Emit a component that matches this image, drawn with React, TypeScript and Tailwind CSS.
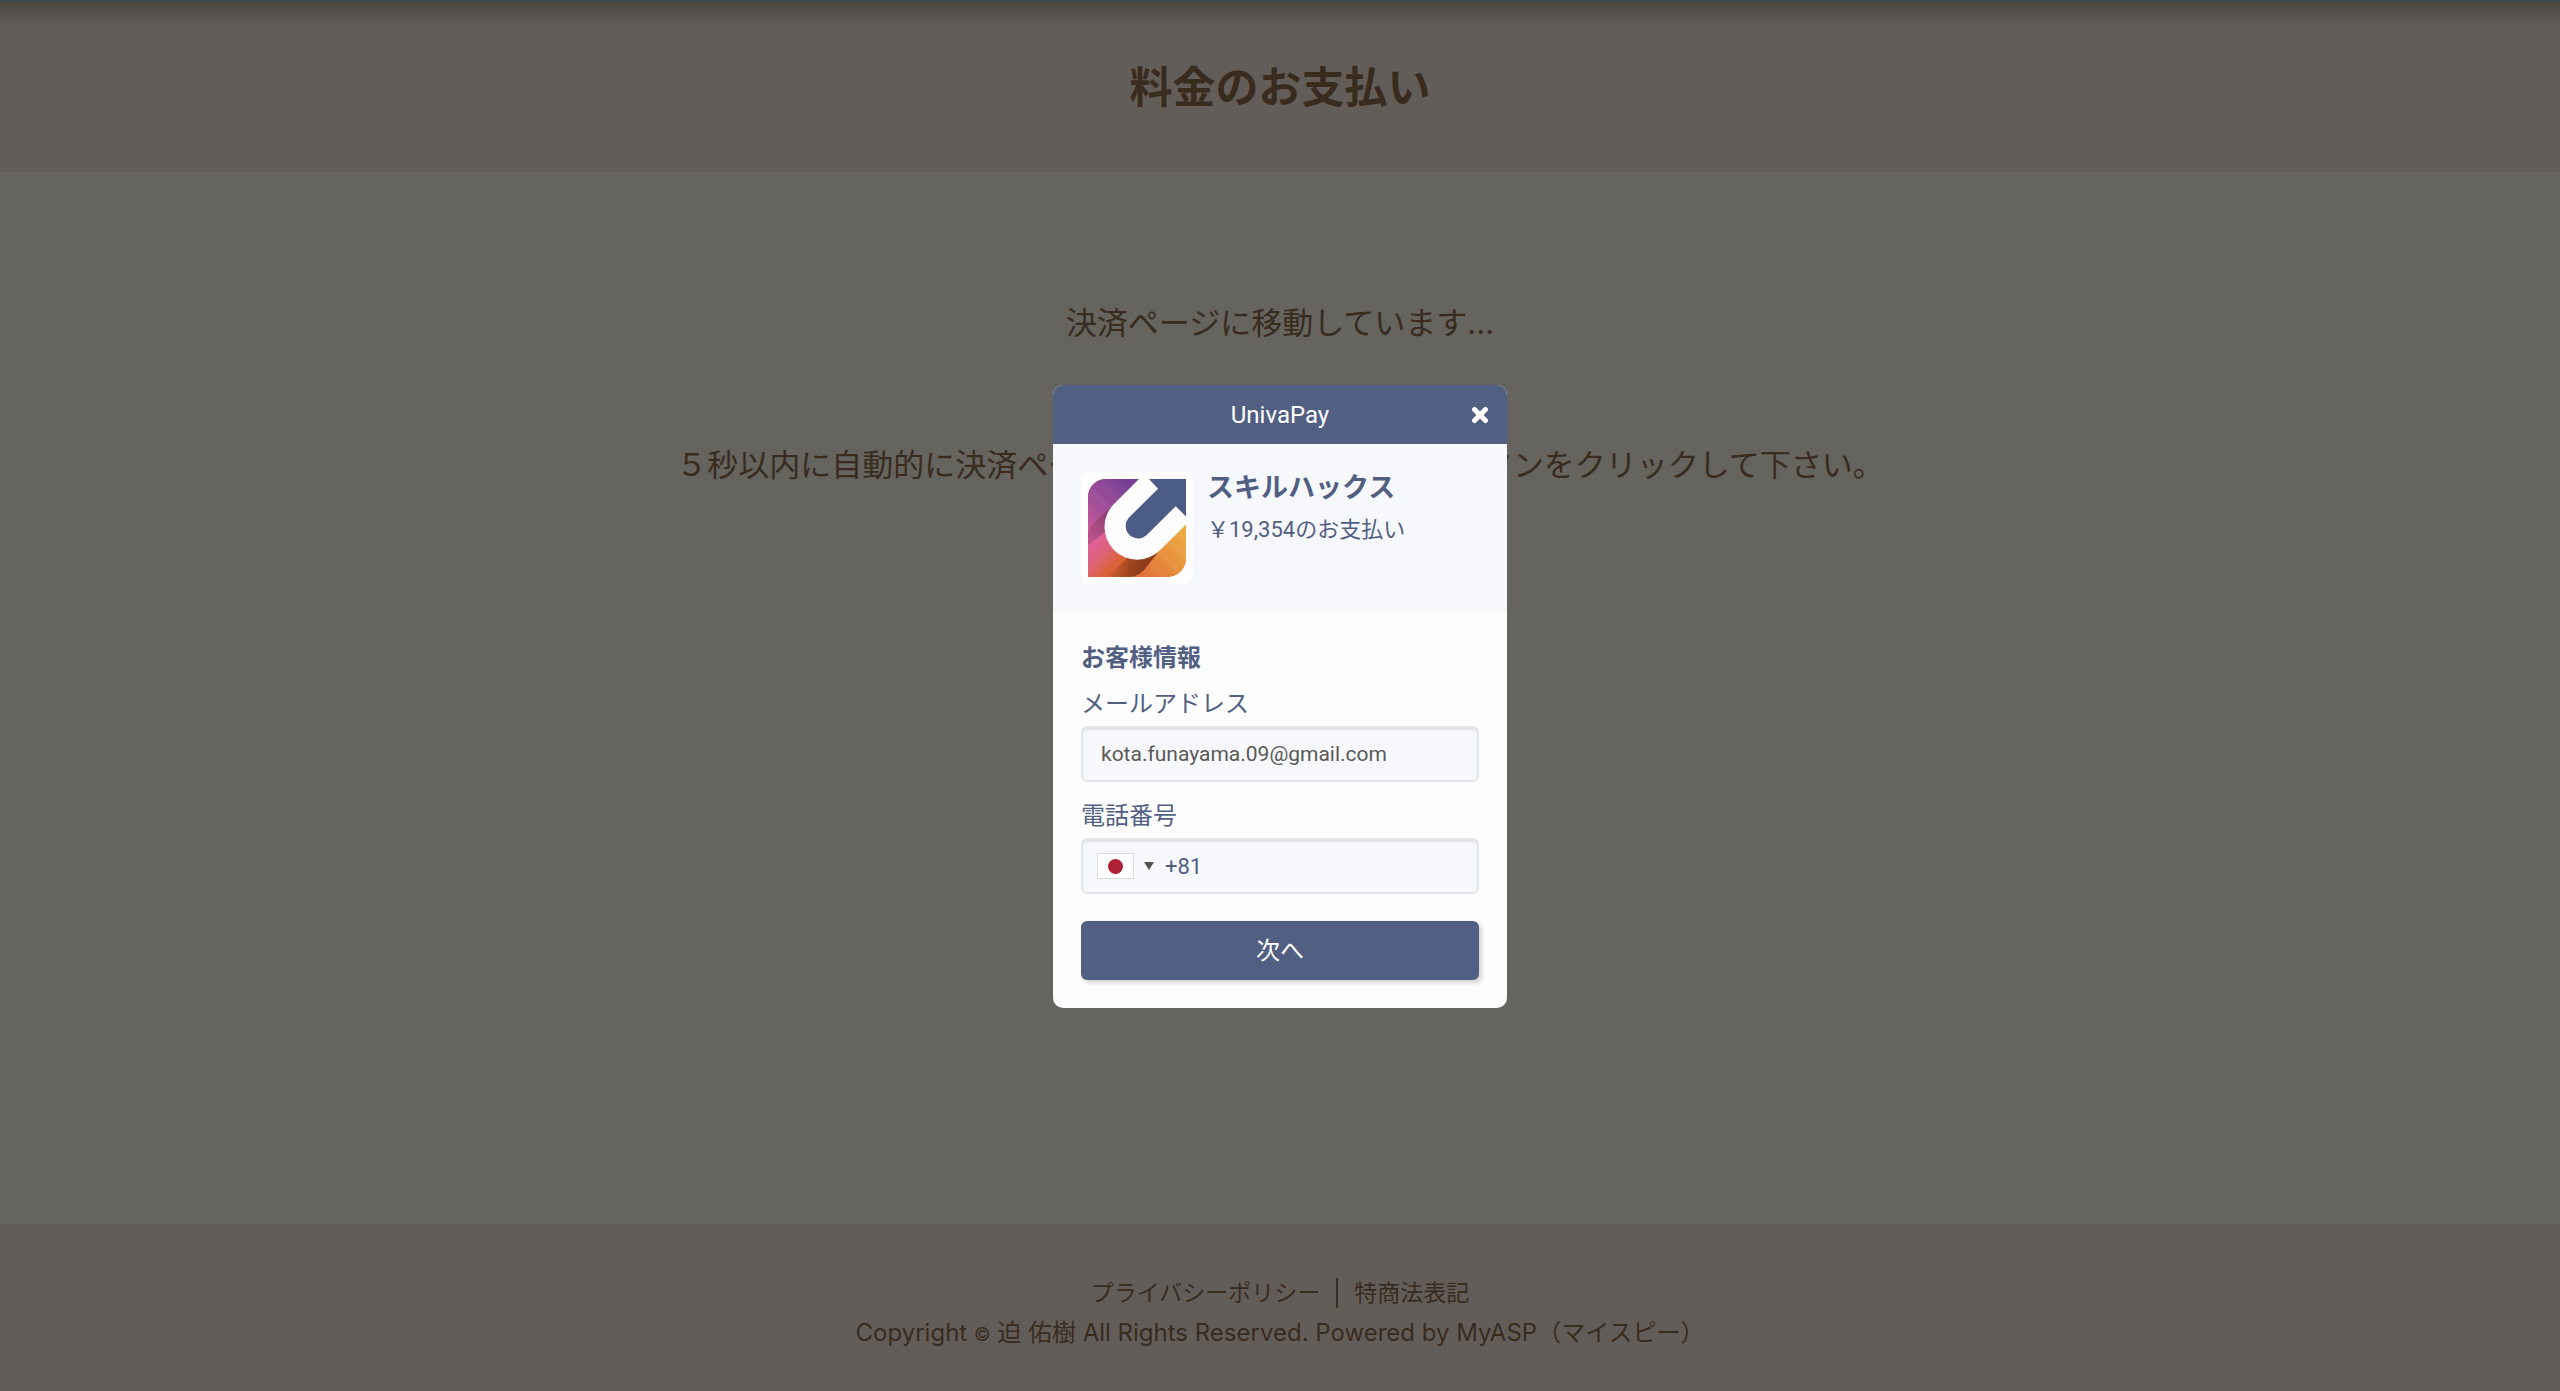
import { FC, ReactNode, useState } from 'react'

const Logo: FC = () => (
  <svg viewBox="0 0 98 98" className="size-[98px]" role="img" aria-label="スキルハックス">
    <defs>
      <linearGradient id="purple" gradientUnits="userSpaceOnUse" x1="42" y1="8" x2="-6" y2="56">
        <stop offset="0" stopColor="#783f96" />
        <stop offset="0.5" stopColor="#a04f98" />
        <stop offset="1" stopColor="#d65c98" />
      </linearGradient>
      <linearGradient id="pink" gradientUnits="userSpaceOnUse" x1="4" y1="62" x2="34" y2="92">
        <stop offset="0" stopColor="#dd6098" />
        <stop offset="0.4" stopColor="#de6279" />
        <stop offset="0.75" stopColor="#dc6238" />
        <stop offset="1" stopColor="#d9622f" />
      </linearGradient>
      <linearGradient id="orange" gradientUnits="userSpaceOnUse" x1="56" y1="98" x2="98" y2="56">
        <stop offset="0" stopColor="#e2703a" />
        <stop offset="0.5" stopColor="#e8903c" />
        <stop offset="1" stopColor="#ecab42" />
      </linearGradient>
      <linearGradient id="shadeLeft" gradientUnits="userSpaceOnUse" x1="22" y1="30" x2="0" y2="60">
        <stop offset="0" stopColor="#8a3a6c" />
        <stop offset="1" stopColor="#bd5590" />
      </linearGradient>
      <linearGradient id="shadeBottom" gradientUnits="userSpaceOnUse" x1="24" y1="90" x2="52" y2="98">
        <stop offset="0" stopColor="#cf5c2d" />
        <stop offset="0.6" stopColor="#9c4520" />
        <stop offset="1" stopColor="#8f3d1c" />
      </linearGradient>
      <clipPath id="tile">
        <path d="M18 0H98V79A19 19 0 0 1 79 98H0V18A18 18 0 0 1 18 0Z" />
      </clipPath>
    </defs>
    <g clipPath="url(#tile)">
      <path d="M0 0H98V98H0Z" fill="url(#pink)" />
      <path d="M0 0H60L24 28L0 52Z" fill="url(#purple)" />
      <path d="M24 27C10 41 2 46 0 54V66L18 52Z" fill="url(#shadeLeft)" />
      <path d="M20 98L40 78L74 74L56 92Q50 98 42 98Z" fill="url(#shadeBottom)" />
      <path d="M43 98Q50 97 56 91L72 71L98 44V98Z" fill="url(#orange)" />
      <path d="M4 12L26 34M14 4L32 22M62 84L76 98M72 74L94 96M82 64L98 80" stroke="#ffffff" strokeOpacity="0.04" strokeWidth="6" />
      <path d="M51 0L26 25A32.600 32.600 0 0 0 72.300 71L98 45.500V0Z" fill="#fefefe" />
      <path d="M61 0H98V37.500L87.700 27.300L58.200 56.500A12.500 12.500 0 0 1 40.500 39L70 9.700Z" fill="#4b5d86" />
    </g>
  </svg>
)

const CloseIcon: FC = () => (
  <svg viewBox="0 0 18 18" className="size-[18px]" fill="none" stroke="currentColor" strokeWidth="5" strokeLinecap="round">
    <path d="M3.500 3.500L14.500 14.500M14.500 3.500L3.500 14.500" />
  </svg>
)

const Field: FC<{ id: string; label: string; children: ReactNode }> = ({ id, label, children }) => (
  <div className="flex flex-col gap-1">
    <label htmlFor={id} className="text-2xl leading-9">{label}</label>
    <div className="flex h-14 items-center rounded-md border-2 border-[#e3e4ea] bg-[#f7f8fc] shadow-[inset_0_2px_2px_#e0e1e7]">
      {children}
    </div>
  </div>
)

const PaymentDialog: FC = () => {
  const [email, setEmail] = useState('kota.funayama.09@gmail.com')
  const [phone, setPhone] = useState('')

  return (
    <div role="dialog" aria-label="UnivaPay" className="w-[454px] overflow-hidden rounded-[10px] bg-[#fdfdfd] font-[Roboto,'Noto_Sans_CJK_JP',sans-serif] text-[#515f82]">
      <div className="grid h-[59px] grid-cols-[1fr_auto_1fr] items-center bg-[#515f82] px-[18px] text-white">
        <h2 className="col-start-2 text-2xl">UnivaPay</h2>
        <button type="button" aria-label="閉じる" className="justify-self-end"><CloseIcon /></button>
      </div>

      <div className="flex gap-[14px] bg-[#f7f8fc] p-7">
        <div className="rounded-lg bg-[#fefefe] p-[7px]">
          <Logo />
        </div>
        <div>
          <h3 className="text-[27px] leading-8 font-bold">スキルハックス</h3>
          <p className="mt-2 text-[22px] leading-9">￥19,354のお支払い</p>
        </div>
      </div>

      <form className="p-7" onSubmit={(e) => e.preventDefault()}>
        <h3 className="mb-[10px] text-2xl leading-9 font-bold">お客様情報</h3>
        <div className="flex flex-col gap-4">
          <Field id="email" label="メールアドレス">
            <input
              id="email"
              type="email"
              value={email}
              onChange={(e) => setEmail(e.target.value)}
              className="h-full w-full bg-transparent px-[18px] text-[21px] text-[#5a5a56] outline-none"
            />
          </Field>
          <Field id="phone" label="電話番号">
            <button type="button" aria-label="日本" className="flex items-center gap-[10px] pl-[14px]">
              <span className="flex h-[26px] w-[37px] items-center justify-center border border-[#dcdcdc] bg-white">
                <span className="size-[15px] rounded-full bg-[#ae2033]" />
              </span>
              <svg viewBox="0 0 10 8" className="h-2 w-[10px]"><path d="M0 0H10L5 8Z" fill="#555550" /></svg>
            </button>
            <input
              id="phone"
              type="tel"
              placeholder="+81"
              value={phone}
              onChange={(e) => setPhone(e.target.value)}
              className="h-full w-full bg-transparent pl-[11px] text-[22px] outline-none placeholder:text-[#515f82]"
            />
          </Field>
        </div>
        <button type="submit" className="mt-[27px] h-[59px] w-full rounded-md bg-[#515f82] text-2xl text-white shadow-[3px_3px_4px_#d5d5d5]">
          次へ
        </button>
      </form>
    </div>
  )
}

const App: FC = () => {
  return (
    <div className="relative flex min-h-screen flex-col bg-[#65645f] font-[Inter,'Noto_Sans_CJK_JP',sans-serif] text-[#392b1e]">
      <header className="border-t-2 border-[#3f494e] bg-[#635d59]">
        <div className="bg-linear-to-b from-[#4b4742] to-transparent to-[26px] py-14 text-center">
          <h1 className="text-[43px] leading-[58px] font-bold">料金のお支払い</h1>
        </div>
      </header>

      <main className="flex grow flex-col items-center gap-24 pt-32 text-[31px] leading-[46px]">
        <p>決済ページに移動しています...</p>
        <p>５秒以内に自動的に決済ページに移動しない場合、下のボタンをクリックして下さい。</p>
      </main>

      <footer className="flex h-[167px] flex-col items-center gap-1 bg-[#635d59] pt-[51px] text-2xl leading-9">
        <nav className="flex items-center text-[23px]">
          <a href="#privacy" className="pr-4">プライバシーポリシー</a>
          <a href="#law" className="border-l-2 border-[#392b1e] pl-4 leading-[30px]">特商法表記</a>
        </nav>
        <p>Copyright <span className="text-lg">©</span> 迫 佑樹 All Rights Reserved. Powered by MyASP（マイスピー）</p>
      </footer>

      <div className="absolute inset-0 flex items-center justify-center pt-0.5">
        <PaymentDialog />
      </div>
    </div>
  )
}

export default App
